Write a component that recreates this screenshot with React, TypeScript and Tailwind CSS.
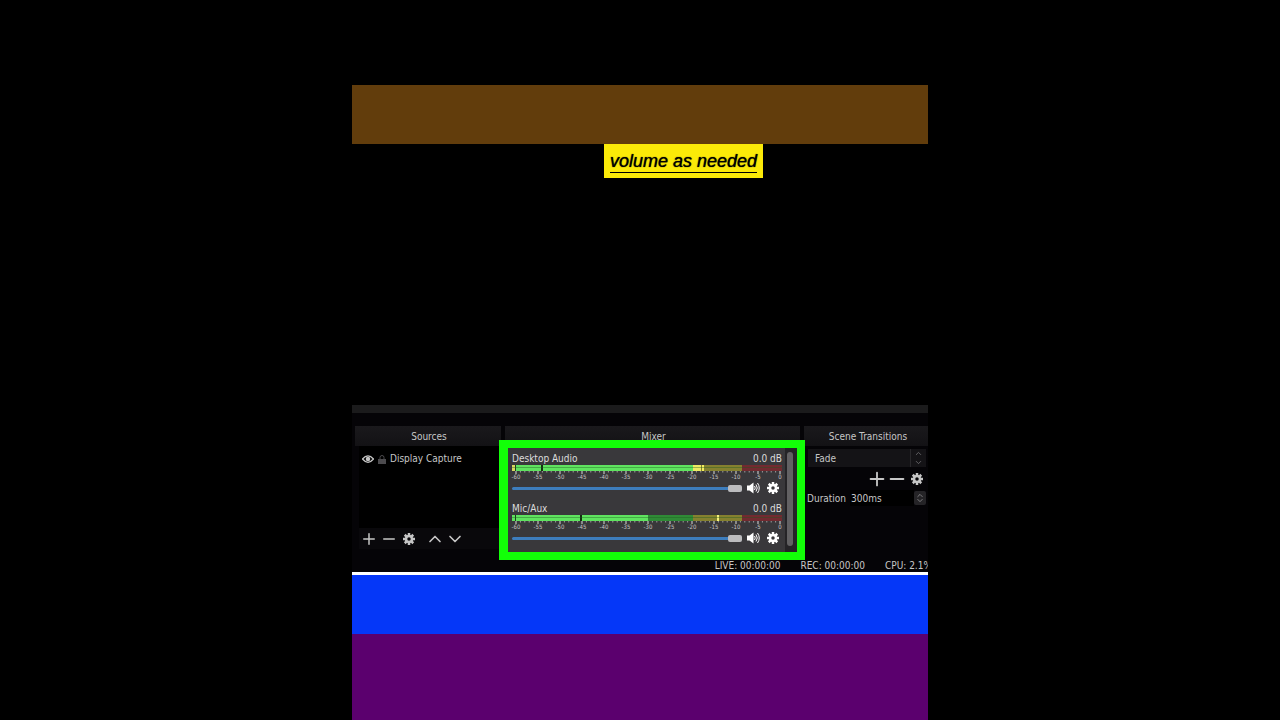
import type { ReactNode } from "react";
import { ChevronDown, ChevronUp, Minus, Plus } from "lucide-react";

type Segment = { from: number; to: number; color: string };

type Channel = {
  id: string;
  name: string;
  segments: Segment[];
};

// Positions run along a 270 unit wide meter
const channels: Channel[] = [
  {
    id: "desktop",
    name: "Desktop Audio",
    segments: [
      { from: 0, to: 181, color: "#5fe35f" },
      { from: 0, to: 3, color: "#d8d860" },
      { from: 3, to: 4, color: "#1c3a1c" },
      { from: 29, to: 31, color: "#12300f" },
      { from: 181, to: 230, color: "#85812f" },
      { from: 181, to: 189, color: "#eeea62" },
      { from: 190, to: 192, color: "#f4ee60" },
      { from: 230, to: 270, color: "#722a30" },
    ],
  },
  {
    id: "mic",
    name: "Mic/Aux",
    segments: [
      { from: 0, to: 136, color: "#5fe35f" },
      { from: 3, to: 4, color: "#1c3a1c" },
      { from: 68, to: 70, color: "#12300f" },
      { from: 136, to: 181, color: "#2f8a36" },
      { from: 181, to: 230, color: "#85812f" },
      { from: 205, to: 207, color: "#f6f27a" },
      { from: 230, to: 270, color: "#722a30" },
    ],
  },
];

const scale = [-60, -55, -50, -45, -40, -35, -30, -25, -20, -15, -10, -5, 0];

function GearIcon({ className }: { className: string }) {
  return (
    <svg viewBox="0 0 24 24" className={className} fill="none" stroke="currentColor">
      <circle cx="12" cy="12" r="6" strokeWidth="5" />
      {[0, 45, 90, 135, 180, 225, 270, 315].map((angle) => (
        <path key={angle} d="M12 0v5" strokeWidth="5" transform={`rotate(${angle} 12 12)`} />
      ))}
    </svg>
  );
}

function SpeakerIcon() {
  return (
    <svg viewBox="0 0 26 24" className="h-3 w-[13px]" fill="none" stroke="currentColor">
      <path d="M0 7h5l8-6v22l-8-6H0z" fill="currentColor" stroke="none" />
      <path d="M15 8q3 4 0 8M18 5q5 7 0 14M21 2q7 10 0 20" strokeWidth="2" />
    </svg>
  );
}

function EyeIcon() {
  return (
    <svg viewBox="0 0 24 16" className="h-2 w-3" fill="none" stroke="currentColor">
      <path d="M1 8Q12-5 23 8Q12 21 1 8z" strokeWidth="2.5" />
      <circle cx="12" cy="8" r="4.5" fill="currentColor" stroke="none" />
    </svg>
  );
}

function LockIcon() {
  return (
    <svg viewBox="0 0 16 18" className="h-[9px] w-2 text-[#4c4b4e]">
      <path d="M4 10V5q0-4 4-4t4 4v5" fill="none" stroke="currentColor" strokeWidth="2" />
      <path d="M0 8h16v10H0z" fill="currentColor" />
    </svg>
  );
}

function IconButton({ label, children }: { label: string; children: ReactNode }) {
  return (
    <button type="button" aria-label={label} className="flex h-4 w-4 items-center justify-center">
      {children}
    </button>
  );
}

function PanelTitle({ children }: { children: ReactNode }) {
  return (
    <h2 className="h-5 bg-gradient-to-b from-[#1a191c] to-[#131215] pl-0.5 text-center text-[10px] leading-[22px]">
      {children}
    </h2>
  );
}

function Meter({ segments }: { segments: Segment[] }) {
  return (
    <svg viewBox="0 0 270 9" preserveAspectRatio="none" className="block h-[9px] w-full">
      {segments.map((s) => (
        <rect key={`${s.from}-${s.to}`} x={s.from} width={s.to - s.from} height="6" fill={s.color} />
      ))}
      <path d="M0 2.5h270" stroke="#1d5a20" strokeOpacity="0.4" />
      {Array.from({ length: 61 }, (_, i) => (
        <rect
          key={i}
          x={3.5 + i * 4.4}
          y="6"
          width="1"
          height={i % 5 === 0 ? 3 : 1.5}
          fill={i % 5 === 0 ? "#dcdcdc" : "#9b9b9b"}
        />
      ))}
    </svg>
  );
}

function MixerChannel({ channel }: { channel: Channel }) {
  return (
    <div className="text-[#dcdcdc]">
      <div className="flex justify-between text-[10px] leading-3">
        <label htmlFor={channel.id}>{channel.name}</label>
        <span>0.0 dB</span>
      </div>
      <Meter segments={channel.segments} />
      <div className="-mr-0.5 flex justify-between text-[6px] leading-[6px] text-[#c4c4c4]">
        {scale.map((db) => (
          <span key={db} className="flex w-2 justify-center">
            {db}
          </span>
        ))}
      </div>
      <div className="flex h-4 items-center text-white">
        <input
          id={channel.id}
          type="range"
          defaultValue={100}
          className="h-[3px] min-w-0 flex-1 appearance-none rounded-sm bg-[#3d7dbd] [&::-webkit-slider-thumb]:h-[7px] [&::-webkit-slider-thumb]:w-[14px] [&::-webkit-slider-thumb]:appearance-none [&::-webkit-slider-thumb]:rounded-xs [&::-webkit-slider-thumb]:bg-[#bcbcbe]"
        />
        <div className="flex gap-1 pr-px pl-[3px]">
          <IconButton label={`Mute ${channel.name}`}>
            <SpeakerIcon />
          </IconButton>
          <IconButton label={`${channel.name} settings`}>
            <GearIcon className="h-3 w-3" />
          </IconButton>
        </div>
      </div>
    </div>
  );
}

function Sources() {
  return (
    <section className="flex flex-col">
      <PanelTitle>Sources</PanelTitle>
      <ul className="ml-1 flex-1 bg-black pt-[7px]">
        <li className="flex items-center gap-1 pl-[3px] text-[10px] leading-3">
          <EyeIcon />
          <LockIcon />
          <span>Display Capture</span>
        </li>
      </ul>
      <div className="mb-1 ml-1 flex h-[21px] items-center gap-1 bg-[#09080b] pl-0.5">
        <IconButton label="Add source">
          <Plus size={18} strokeWidth={2} className="shrink-0" />
        </IconButton>
        <IconButton label="Remove source">
          <Minus size={18} strokeWidth={2} className="shrink-0" />
        </IconButton>
        <IconButton label="Source settings">
          <GearIcon className="h-3 w-3" />
        </IconButton>
        <div className="ml-1.5 flex gap-1">
          <IconButton label="Move up">
            <ChevronUp size={20} strokeWidth={2} className="shrink-0" />
          </IconButton>
          <IconButton label="Move down">
            <ChevronDown size={20} strokeWidth={2} className="shrink-0" />
          </IconButton>
        </div>
      </div>
    </section>
  );
}

function Mixer() {
  return (
    <section className="relative">
      <PanelTitle>Mixer</PanelTitle>
      <div className="flex bg-[#39383b] pl-[7px]">
        <div className="flex min-w-0 flex-1 flex-col gap-[7px] pt-[7px] pb-[7px]">
          {channels.map((channel) => (
            <MixerChannel key={channel.id} channel={channel} />
          ))}
        </div>
        <div className="ml-[3px] w-[15px] bg-[#252427] pt-1.5 pb-[7px] pl-0.5">
          <div className="h-full w-[6px] rounded-full bg-[#626163]" />
        </div>
      </div>
      {/* highlight frame, spills over the neighbouring panels */}
      <div className="pointer-events-none absolute top-3.5 -right-[5px] -bottom-[7px] -left-1.5 z-10 border-8 border-l-9 border-[#12ff08]" />
    </section>
  );
}

function Transitions() {
  return (
    <section className="min-w-0">
      <PanelTitle>
        <span className="pl-0.5">Scene Transitions</span>
      </PanelTitle>
      <div className="relative mt-[3px] mr-0.5 ml-1">
        <select
          aria-label="Transition"
          className="block h-[18px] w-full appearance-none bg-[#141316] pl-[7px] text-[10px]"
        >
          <option>Fade</option>
        </select>
        <div className="pointer-events-none absolute inset-y-0 right-0 flex w-4 flex-col items-center justify-center border-l border-[#29282b] text-[#77767a]">
          <ChevronUp size={9} />
          <ChevronDown size={9} />
        </div>
      </div>
      <div className="mt-1 flex justify-end gap-1 pr-[3px]">
        <IconButton label="Add transition">
          <Plus size={22} strokeWidth={2} className="shrink-0" />
        </IconButton>
        <IconButton label="Remove transition">
          <Minus size={22} strokeWidth={2} className="shrink-0" />
        </IconButton>
        <IconButton label="Transition settings">
          <GearIcon className="h-3 w-3" />
        </IconButton>
      </div>
      <div className="mt-[3px] mr-0.5 ml-[3px] flex h-4 items-center text-[10px]">
        <label htmlFor="duration">Duration</label>
        <input
          id="duration"
          defaultValue="300ms"
          className="ml-1 h-full w-0 min-w-0 flex-1 bg-black pl-px"
        />
        <div className="flex h-[14px] w-3 flex-col items-center justify-center rounded-xs bg-[#252427] text-[#99989b]">
          <ChevronUp size={10} className="-mb-0.5" />
          <ChevronDown size={10} className="-mt-0.5" />
        </div>
      </div>
    </section>
  );
}

export default function App() {
  return (
    <main className="flex min-h-screen justify-center bg-black">
      <div className="flex w-[45%] min-w-[576px] flex-col overflow-hidden pt-[85px]">
        <div className="h-[59px] bg-[#623d0c]" />
        <div className="flex h-[261px] items-start pl-[252px]">
          <p className="h-[34px] bg-[#fbea08] px-1.5 pt-1.5 font-['Liberation_Sans',Arial,sans-serif] text-[18px] leading-[22px] text-black italic [text-shadow:0_0_1px_#000]">
            <span className="block border-b border-black whitespace-nowrap">volume as needed</span>
          </p>
        </div>
        <div className="bg-[#050407] font-['DejaVu_Sans_Condensed','Noto_Sans',sans-serif] text-[#c6c6c6]">
          <div className="h-2 bg-[#1b1b1c]" />
          <div className="grid grid-cols-[146fr_295fr_124fr] gap-1 pt-[13px] pl-[3px]">
            <Sources />
            <Mixer />
            <Transitions />
          </div>
          <footer className="-mr-1 flex h-[19px] justify-end gap-5 pt-[7px] text-[10px] leading-3 whitespace-nowrap">
            <span>LIVE: 00:00:00</span>
            <span>REC: 00:00:00</span>
            <span>CPU: 2.1%</span>
          </footer>
        </div>
        <div className="h-[3px] bg-white" />
        <div className="h-[59px] bg-[#0537f8]" />
        <div className="min-h-[86px] flex-1 bg-[#5b006e]" />
      </div>
    </main>
  );
}
